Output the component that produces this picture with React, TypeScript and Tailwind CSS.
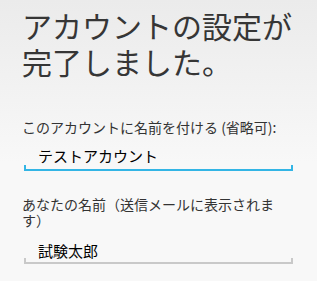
import React from "react";

const font = { fontFamily: '"Noto Sans CJK JP", "Noto Sans", sans-serif' };

function Field({ value, active }: { value: string; active?: boolean }) {
  const color = active ? "border-[#33b5e5]" : "border-[#c9c9c9]";
  const tick = active ? "bg-[#33b5e5]" : "bg-[#c9c9c9]";
  return (
    <div className={`relative ml-[2px] w-[269px] pl-[14px] border-b-2 ${color} ${active ? "pb-[3px]" : "pb-[1px]"}`}>
      <div className="text-[15px] leading-[20px] text-black">{value}</div>
      <span className={`absolute left-0 bottom-0 w-[2px] h-[4px] ${tick}`} />
      <span className={`absolute right-0 bottom-0 w-[2px] h-[4px] ${tick}`} />
    </div>
  );
}

export default function App() {
  return (
    <div
      style={font}
      className="w-[317px] h-[281px] overflow-hidden bg-[linear-gradient(to_bottom,#ebebeb,#f8f8f8_58%,#f8f8f8)] pl-[22px] pt-[7px]"
    >
      <h1 className="w-[280px] text-[30px] leading-[36px] text-[#363636] font-normal">
        アカウントの設定が完了しました。
      </h1>
      <div className="mt-[40px] w-[285px] text-[14px] leading-[16px] text-[#333333]">
        このアカウントに名前を付ける (省略可):
      </div>
      <div className="mt-[11px]">
        <Field value="テストアカウント" active />
      </div>
      <div className="mt-[25px] w-[262px] text-[14px] leading-[16px] text-[#333333]">
        あなたの名前（送信メールに表示されます）
      </div>
      <div className="mt-[13px]">
        <Field value="試験太郎" />
      </div>
    </div>
  );
}
